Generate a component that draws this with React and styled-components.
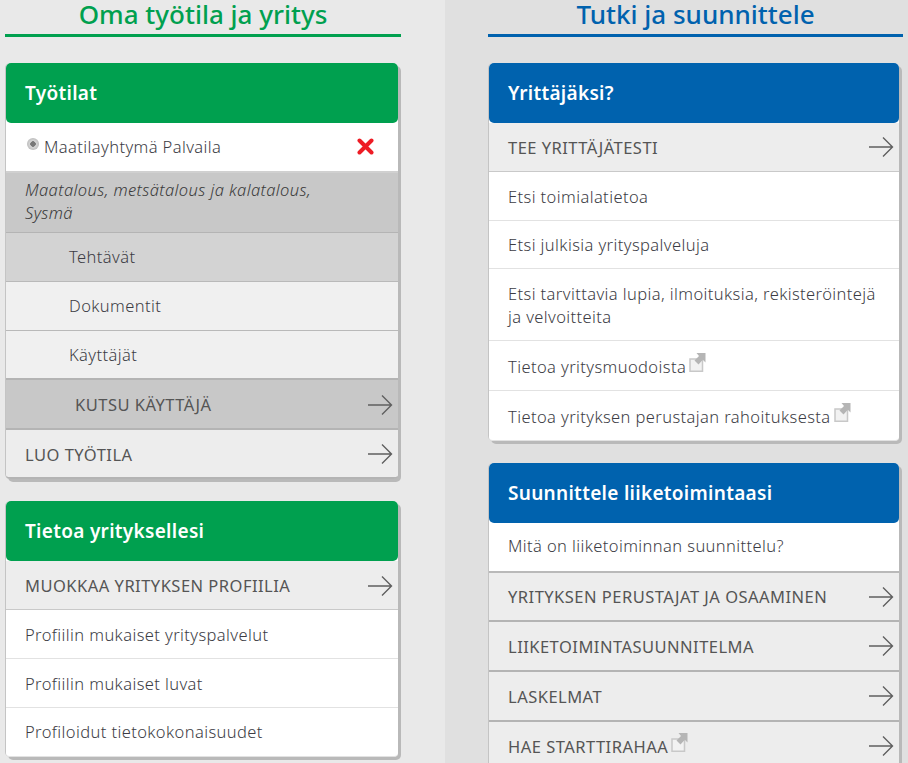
import React from 'react';
import styled, { createGlobalStyle } from 'styled-components';

const Global = createGlobalStyle`
  html, body { margin: 0; padding: 0; background: #e0e0e0; }
  body { font-family: "Noto Sans", "Open Sans", sans-serif; overflow: hidden; }
`;
const Page = styled.div`
  display: grid; grid-template-columns: 445px 463px; height: 763px; overflow: hidden;
`;
const Column = styled.div`
  background: ${p => p.$bg};
  padding-left: ${p => p.$left}px;
  padding-right: ${p => p.$right}px;
`;
const Heading = styled.h2`
  margin: 0 0 26px; height: 37px; box-sizing: border-box;
  font-size: 26px; font-weight: 500; line-height: 29px; text-align: center;
  color: ${p => p.$color}; border-bottom: 3px solid ${p => p.$color};
`;
const Card = styled.section`
  margin: 0 ${p => p.$mr}px 22px 0; border-radius: 5px;
  box-shadow: 3px 3px 0 #b9b9b9; background: #fff;
  border-left: 1px solid #c4c4c4;
`;
const CardHead = styled.h3`
  margin: 0; height: 60px; display: flex; align-items: center; padding-left: 19px;
  background: ${p => p.$color}; border-radius: 5px; color: #fff;
  font-size: 19px; font-weight: 600; letter-spacing: 0.3px;
`;
const Row = styled.div`
  display: flex; align-items: center; justify-content: space-between; box-sizing: border-box;
  min-height: ${p => p.$h || 49}px;
  padding: ${p => p.$pt || 0}px 5px ${p => p.$pb || 0}px 19px;
  background: ${p => p.$bg || '#fff'};
  border-bottom: ${p => p.$bw || 1}px solid ${p => p.$line || '#e2e2e2'};
  color: #3c3c44; font-size: 16.5px; font-weight: 300; line-height: 23px;
  letter-spacing: 0.4px;
  &:last-child { border-radius: 0 0 4px 4px; }
`;
const Upper = styled.span`
  color: #555; font-size: 16.5px; font-weight: 400; letter-spacing: 0.48px;
  display: inline-flex; align-items: center; padding-left: ${p => p.$indent || 0}px;
`;
const Plain = styled.span`display: inline-flex; align-items: center; padding-left: ${p => p.$indent || 0}px;`;
const Wrapped = styled.span`display: block; max-width: 372px;`;
const Italic = styled.i`font-weight: 300; color: #3a3a3a; max-width: 296px;`;
const Radio = styled.span`
  width: 12px; height: 12px; border-radius: 50%; margin: -4px 5px 0 2px; flex: none;
  background: radial-gradient(circle, #777 0 2.5px, #d8d8d8 3px, #bdbdbd 6px);
`;
const RowEnd = styled.span`display: inline-flex; margin-right: ${p => p.$mr || 0}px;`;
const ExtWrap = styled.svg`margin-left: 3px; margin-top: -7px; flex: none;`;

const Arrow = () => (
  <svg width="26" height="22" viewBox="0 0 26 22" fill="none" stroke="#5f5f5f" strokeWidth="1.4">
    <path d="M1 11H24.5M15 1.5L24.5 11L15 20.5" />
  </svg>
);
const Ext = () => (
  <ExtWrap width="17" height="19" viewBox="0 0 17 19">
    <path d="M1 6H13.5V18.2H1Z" fill="#f2f2f2" stroke="#c8c8c8" strokeWidth="1.5" />
    <path d="M7.5 0H16.5V9.5L13.8 6.8L9.5 11.5L5.5 7.5L10 3Z" fill="#b5b5b5" />
  </ExtWrap>
);
const Cross = () => (
  <svg width="17" height="17" viewBox="0 0 17 17">
    <path d="M2.5 2.5L14.5 14.5M14.5 2.5L2.5 14.5" stroke="#ee1c25" strokeWidth="4" strokeLinecap="round" />
  </svg>
);

const GREEN = '#00a04f', BLUE = '#0062ae';
const LINK = { $bg: '#ededed', $line: '#b4b4b4', $bw: 2 };

export default function App() {
  return (
    <Page>
      <Global />
      <Column $bg="#e9e9e9" $left={5} $right={44}>
        <Heading $color={GREEN}>Oma työtila ja yritys</Heading>
        <Card $mr={3}>
          <CardHead $color={GREEN}>Työtilat</CardHead>
          <Row $h={50} $line="#d0d0d0" $bw={2} $pb={2}><Plain><Radio />Maatilayhtymä Palvaila</Plain><RowEnd $mr={19}><Cross /></RowEnd></Row>
          <Row $h={60} $bg="#c8c8c8" $line="#b4b4b4" $bw={1} $pb={3}><Italic>Maatalous, metsätalous ja kalatalous, Sysmä</Italic></Row>
          <Row $bg="#d3d3d3" $line="#b9b9b9" $pb={2}><Plain $indent={44}>Tehtävät</Plain></Row>
          <Row $bg="#f0f0f0" $line="#b9b9b9" $pb={2}><Plain $indent={44}>Dokumentit</Plain></Row>
          <Row $bg="#f0f0f0" $line="#b4b4b4" $bw={2}><Plain $indent={44}>Käyttäjät</Plain></Row>
          <Row $bg="#c8c8c8" $line="#b4b4b4" $bw={2} $h={50} $pt={1}><Upper $indent={50}>KUTSU KÄYTTÄJÄ</Upper><Arrow /></Row>
          <Row {...LINK} $h={49} $pt={1}><Upper>LUO TYÖTILA</Upper><Arrow /></Row>
        </Card>
        <Card $mr={3}>
          <CardHead $color={GREEN}>Tietoa yrityksellesi</CardHead>
          <Row {...LINK} $bw={1} $line="#c9c9c9" $pt={1}><Upper>MUOKKAA YRITYKSEN PROFIILIA</Upper><Arrow /></Row>
          <Row>Profiilin mukaiset yrityspalvelut</Row>
          <Row>Profiilin mukaiset luvat</Row>
          <Row $pb={2}>Profiloidut tietokokonaisuudet</Row>
        </Card>
      </Column>
      <Column $bg="#e0e0e0" $left={43} $right={5}>
        <Heading $color={BLUE}>Tutki ja suunnittele</Heading>
        <Card $mr={4}>
          <CardHead $color={BLUE}>Yrittäjäksi?</CardHead>
          <Row {...LINK} $bw={1} $line="#c9c9c9"><Upper>TEE YRITTÄJÄTESTI</Upper><Arrow /></Row>
          <Row>Etsi toimialatietoa</Row>
          <Row $h={48}>Etsi julkisia yrityspalveluja</Row>
          <Row $h={72}><Wrapped>Etsi tarvittavia lupia, ilmoituksia, rekisteröintejä ja velvoitteita</Wrapped></Row>
          <Row $h={50} $pt={1}><Plain>Tietoa yritysmuodoista<Ext /></Plain></Row>
          <Row $h={50} $pt={1}><Plain>Tietoa yrityksen perustajan rahoituksesta<Ext /></Plain></Row>
        </Card>
        <Card $mr={4}>
          <CardHead $color={BLUE}>Suunnittele liiketoimintaasi</CardHead>
          <Row $line="#b9b9b9" $h={50} $bw={2} $pb={3}>Mitä on liiketoiminnan suunnittelu?</Row>
          <Row {...LINK}><Upper>YRITYKSEN PERUSTAJAT JA OSAAMINEN</Upper><Arrow /></Row>
          <Row {...LINK} $h={50}><Upper>LIIKETOIMINTASUUNNITELMA</Upper><Arrow /></Row>
          <Row {...LINK} $h={50}><Upper>LASKELMAT</Upper><Arrow /></Row>
          <Row {...LINK} $h={50}><Upper>HAE STARTTIRAHAA<Ext /></Upper><Arrow /></Row>
        </Card>
      </Column>
    </Page>
  );
}
